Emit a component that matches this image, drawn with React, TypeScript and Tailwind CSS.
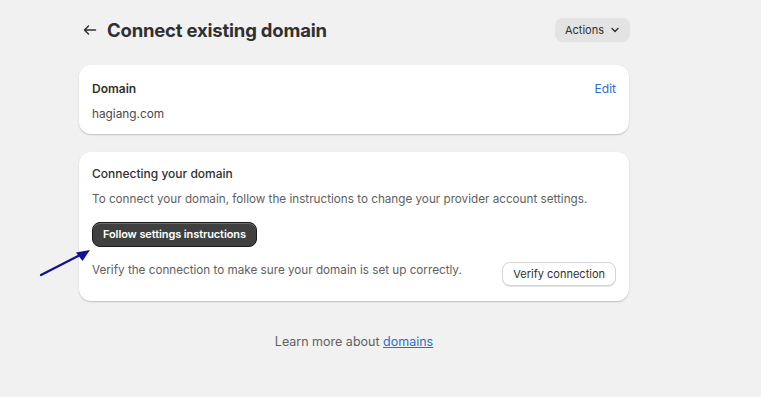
import React from "react";

export default function App() {
  return (
    <div className="relative w-[761px] h-[397px] bg-[#f1f1f1] text-[#303030]" style={{ fontFamily: "Inter, 'Noto Sans', sans-serif" }}>
      <div className="w-[550px] ml-[79px] pt-[18px] flex flex-col">
        <div className="flex items-center justify-between h-[24px]">
          <div className="flex items-center">
            <svg width="20" height="20" viewBox="0 0 20 20" className="ml-[1px] mr-[7px]">
              <path d="M15.5 10H4.5M8.5 6L4.5 10L8.5 14" fill="none" stroke="#303030" strokeWidth="1.5" strokeLinecap="round" strokeLinejoin="round" />
            </svg>
            <h1 className="text-[18.5px] font-bold tracking-[-0.2px] leading-[24px]">Connect existing domain</h1>
          </div>
          <button className="h-[24px] px-[10px] rounded-[8px] bg-[#e3e3e3] flex items-center gap-[6px] text-[11px] font-normal text-[#303030] mr-[-1px]">
            Actions
            <svg width="10" height="10" viewBox="0 0 10 10"><path d="M2 3.5L5 6.5L8 3.5" fill="none" stroke="#303030" strokeWidth="1.4" strokeLinecap="round" strokeLinejoin="round" /></svg>
          </button>
        </div>

        <div className="mt-[23px] bg-white rounded-[12px] shadow-[0_1px_0_0_rgba(26,26,26,0.07),0_1px_2px_rgba(0,0,0,0.15)] px-[13px] pt-[14px] pb-[14px] h-[69px]">
          <div className="flex justify-between items-center h-[20px]">
            <span className="text-[12px] font-semibold">Domain</span>
            <span className="text-[12px] text-[#2c6ecb]">Edit</span>
          </div>
          <div className="mt-[5px] text-[11.8px] text-[#4a4a4a] leading-[20px]">hagiang.com</div>
        </div>

        <div className="mt-[18px] bg-white rounded-[12px] shadow-[0_1px_0_0_rgba(26,26,26,0.07),0_1px_2px_rgba(0,0,0,0.15)] px-[13px] pt-[12px] h-[149px]">
          <div className="text-[12px] font-medium leading-[20px] text-[#303030]">Connecting your domain</div>
          <div className="mt-[5px] text-[11.7px] leading-[20px] text-[#616161] whitespace-nowrap">To connect your domain, follow the instructions to change your provider account settings.</div>
          <button className="mt-[13px] h-[25px] px-[10px] rounded-[8px] bg-[#404040] border border-[#1a1a1a] text-white text-[11px] font-semibold shadow-[inset_0_1px_0_rgba(255,255,255,0.25)] tracking-[-0.1px]">Follow settings instructions</button>
          <div className="mt-[13px] flex justify-between items-start">
            <span className="text-[11.7px] leading-[20px] text-[#616161] whitespace-nowrap">Verify the connection to make sure your domain is set up correctly.</span>
            <button className="mt-[2px] h-[24px] px-[10px] rounded-[8px] bg-white border border-[#d4d4d4] shadow-[0_1px_0_rgba(0,0,0,0.1)] text-[11px] font-normal text-[#303030] whitespace-nowrap">Verify connection</button>
          </div>
        </div>

        <div className="mt-[31px] text-center text-[12.5px] text-[#616161] leading-[20px]">
          Learn more about <a className="text-[#2c6ecb] underline">domains</a>
        </div>
      </div>

      <svg className="absolute left-[38px] top-[246px]" width="56" height="32" viewBox="0 0 56 32">
        <path d="M3 29L44 8" stroke="#14118f" strokeWidth="2.2" strokeLinecap="round" />
        <path d="M52 4L38 6.5L44.5 15Z" fill="#14118f" />
      </svg>
    </div>
  );
}
